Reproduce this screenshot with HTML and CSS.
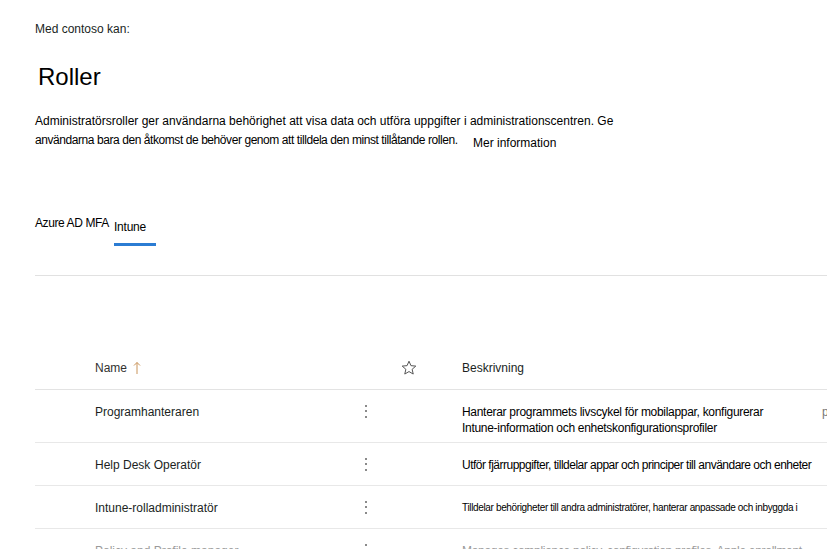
FILE: index.html
```html
<!DOCTYPE html>
<html lang="sv">
<head>
<meta charset="utf-8">
<title>Roller</title>
<link rel="stylesheet" href="styles.css">
</head>
<body>
<div class="page">
  <p class="intro">Med contoso kan:</p>
  <h1 class="title">Roller</h1>
  <p class="desc">Administratörsroller ger användarna behörighet att visa data och utföra uppgifter i administrationscentren. Ge<br><span class="tight">användarna bara den åtkomst de behöver genom att tilldela den minst tillåtande rollen.</span> <a class="more">Mer information</a></p>

  <div class="tabs">
    <div class="tab">Azure AD MFA</div>
    <div class="tab active">Intune</div>
  </div>
  <div class="divider"></div>

  <div class="table">
    <div class="row head">
      <div></div>
      <div class="name">Name <svg class="arrow" width="8" height="14" viewBox="0 0 8 14"><path d="M4 13V1.5M1 4.5L4 1.5L7 4.5" fill="none" stroke="#c9945a" stroke-width="1"/></svg></div>
      <div></div>
      <div class="star"><svg width="16" height="16" viewBox="0 0 16 16"><path d="M8 1.2l1.95 4.45 4.85.45-3.67 3.2 1.1 4.75L8 11.55 3.77 14.05l1.1-4.75L1.2 6.1l4.85-.45z" fill="none" stroke="#555" stroke-width="1" stroke-linejoin="round"/></svg></div>
      <div class="dtext">Beskrivning</div>
      <div></div>
    </div>
    <div class="row tall">
      <div></div>
      <div class="name">Programhanteraren</div>
      <div><span class="kebab"><i></i><i></i><i></i></span></div>
      <div></div>
      <div class="dtext">Hanterar programmets livscykel för mobilappar, konfigurerar<br>Intune-information och enhetskonfigurationsprofiler</div>
      <div class="extra">programhantering</div>
    </div>
    <div class="row">
      <div></div>
      <div class="name">Help Desk Operatör</div>
      <div><span class="kebab"><i></i><i></i><i></i></span></div>
      <div></div>
      <div class="dtext nowrap narrow">Utför fjärruppgifter, tilldelar appar och principer till användare och enheter</div>
      <div></div>
    </div>
    <div class="row">
      <div></div>
      <div class="name">Intune-rolladministratör</div>
      <div><span class="kebab"><i></i><i></i><i></i></span></div>
      <div></div>
      <div class="dtext small nowrap">Tilldelar behörigheter till andra administratörer, hanterar anpassade och inbyggda i</div>
      <div></div>
    </div>
    <div class="row faded">
      <div></div>
      <div class="name">Policy and Profile manager</div>
      <div><span class="kebab"><i></i><i></i><i></i></span></div>
      <div></div>
      <div class="dtext nowrap">Manages compliance policy, configuration profiles, Apple enrollment</div>
      <div></div>
    </div>
  </div>
</div>
</body>
</html>
```

FILE: styles.css
```css
html, body {
  margin: 0;
  padding: 0;
  background: #fff;
  overflow: hidden;
}
body {
  font-family: "Liberation Sans", Arial, sans-serif;
  font-size: 12px;
  line-height: 16px;
  color: #201f1e;
  width: 827px;
  height: 549px;
}
.page {
  padding-left: 35px;
}
.intro {
  margin: 0;
  padding-top: 21px;
}
.title {
  margin: 24px 0 0 3px;
  font-size: 24px;
  line-height: 32px;
  font-weight: normal;
  color: #000;
}
.desc {
  margin: 19px 0 0 0;
  line-height: 19px;
  white-space: nowrap;
  color: #000;
}
.tight {
  letter-spacing: -0.43px;
}
.more {
  margin-left: 12px;
  display: inline-block;
  vertical-align: -3px;
  color: #000;
}
.tabs {
  display: flex;
  gap: 5px;
  margin-top: 62px;
  align-items: flex-start;
}
.tab {
  color: #000;
  letter-spacing: -0.4px;
}
.tab.active {
  padding: 4px 10px 8px 0;
  border-bottom: 3px solid #2b7cd3;
  letter-spacing: -0.2px;
}
.divider {
  margin-top: 29px;
  height: 1px;
  background: #e1e1e1;
}
.table {
  margin-top: 71px;
  width: 1000px;
}
.row {
  display: grid;
  grid-template-columns: 60px 270px 36px 61px 360px 1fr;
  padding-top: 14px;
  height: 28px;
  border-bottom: 1px solid #e8e8e8;
  align-items: start;
}
.row.head {
  padding-top: 0;
  height: 42px;
  align-items: center;
  border-bottom-color: #e3e3e3;
}
.row.tall {
  height: 38px;
}
.name {
  color: #201f1e;
  white-space: nowrap;
}
.head .name {
  color: #323130;
  display: flex;
  align-items: center;
  gap: 6px;
}
.head .arrow {
  display: block;
}
.star svg {
  display: block;
}
.dtext {
  color: #000;
  letter-spacing: -0.3px;
}
.head .dtext {
  letter-spacing: 0;
  color: #201f1e;
}
.nowrap {
  white-space: nowrap;
}
.narrow {
  letter-spacing: -0.5px;
}
.small {
  font-size: 10px;
  letter-spacing: -0.35px;
}
.extra {
  color: #777;
  white-space: nowrap;
}
.kebab {
  display: flex;
  flex-direction: column;
  gap: 3.3px;
  width: 2px;
  margin-top: 1px;
}
.kebab i {
  display: block;
  width: 2px;
  height: 2px;
  background: #8a8a8a;
}
.faded .name,
.faded .dtext {
  color: #9a9a9a;
}
```
